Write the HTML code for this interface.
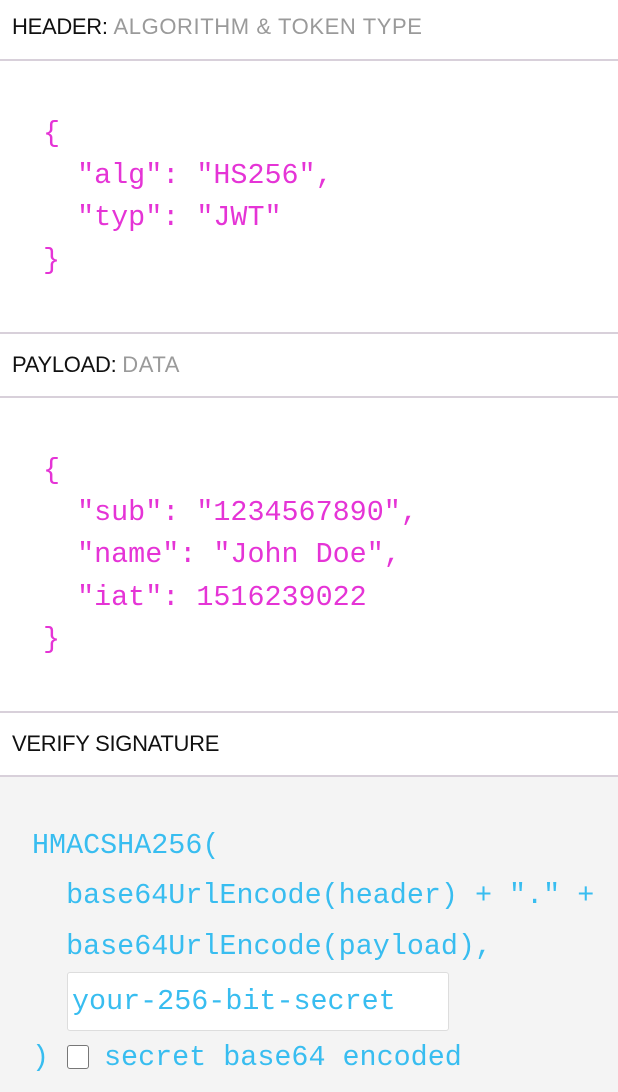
<!DOCTYPE html>
<html><head><meta charset="utf-8"><style>
body{margin:0;width:618px;height:1092px;overflow:hidden;background:#fff;position:relative;font-family:"Liberation Sans",sans-serif}
.t{position:absolute;left:12px;font-size:22px;color:#111;white-space:nowrap;letter-spacing:-0.3px}
.t span{color:#9a9a9a;letter-spacing:0.6px}
.hr{position:absolute;left:0;width:618px;height:2px;background:#d8d0da}
.c{position:absolute;font-family:"Liberation Mono",monospace;font-size:28.4px;white-space:pre;line-height:1}
.m{color:#e534d6}
.b{color:#38bdf0}
</style></head><body>
<div class="t" style="top:14px">HEADER: <span>ALGORITHM &amp; TOKEN TYPE</span></div>
<div class="hr" style="top:59px"></div>
<div class="c m" style="left:43px;top:120px">{</div>
<div class="c m" style="left:43px;top:162px">  "alg": "HS256",</div>
<div class="c m" style="left:43px;top:204px">  "typ": "JWT"</div>
<div class="c m" style="left:43px;top:247px">}</div>
<div class="hr" style="top:332px"></div>
<div class="t" style="top:352px">PAYLOAD: <span>DATA</span></div>
<div class="hr" style="top:396px"></div>
<div class="c m" style="left:43px;top:457px">{</div>
<div class="c m" style="left:43px;top:499px">  "sub": "1234567890",</div>
<div class="c m" style="left:43px;top:541px">  "name": "John Doe",</div>
<div class="c m" style="left:43px;top:584px">  "iat": 1516239022</div>
<div class="c m" style="left:43px;top:626px">}</div>
<div class="hr" style="top:711px"></div>
<div class="t" style="top:731px">VERIFY SIGNATURE</div>
<div class="hr" style="top:775px"></div>
<div style="position:absolute;left:0;top:777px;width:618px;height:315px;background:#f4f4f4"></div>
<div class="c b" style="left:32px;top:832px">HMACSHA256(</div>
<div class="c b" style="left:32px;top:882px">  base64UrlEncode(header) + "." +</div>
<div class="c b" style="left:32px;top:933px">  base64UrlEncode(payload),</div>
<div style="position:absolute;left:67px;top:972px;width:380px;height:57px;background:#fff;border:1px solid #ddd;border-radius:3px"></div>
<div class="c b" style="left:72px;top:988px">your-256-bit-secret</div>
<div class="c b" style="left:32px;top:1044px">)</div>
<div style="position:absolute;left:67px;top:1045px;width:20px;height:22px;border:1.5px solid #777;border-radius:3px;background:#fff"></div>
<div class="c b" style="left:104px;top:1044px">secret base64 encoded</div>
</body></html>
